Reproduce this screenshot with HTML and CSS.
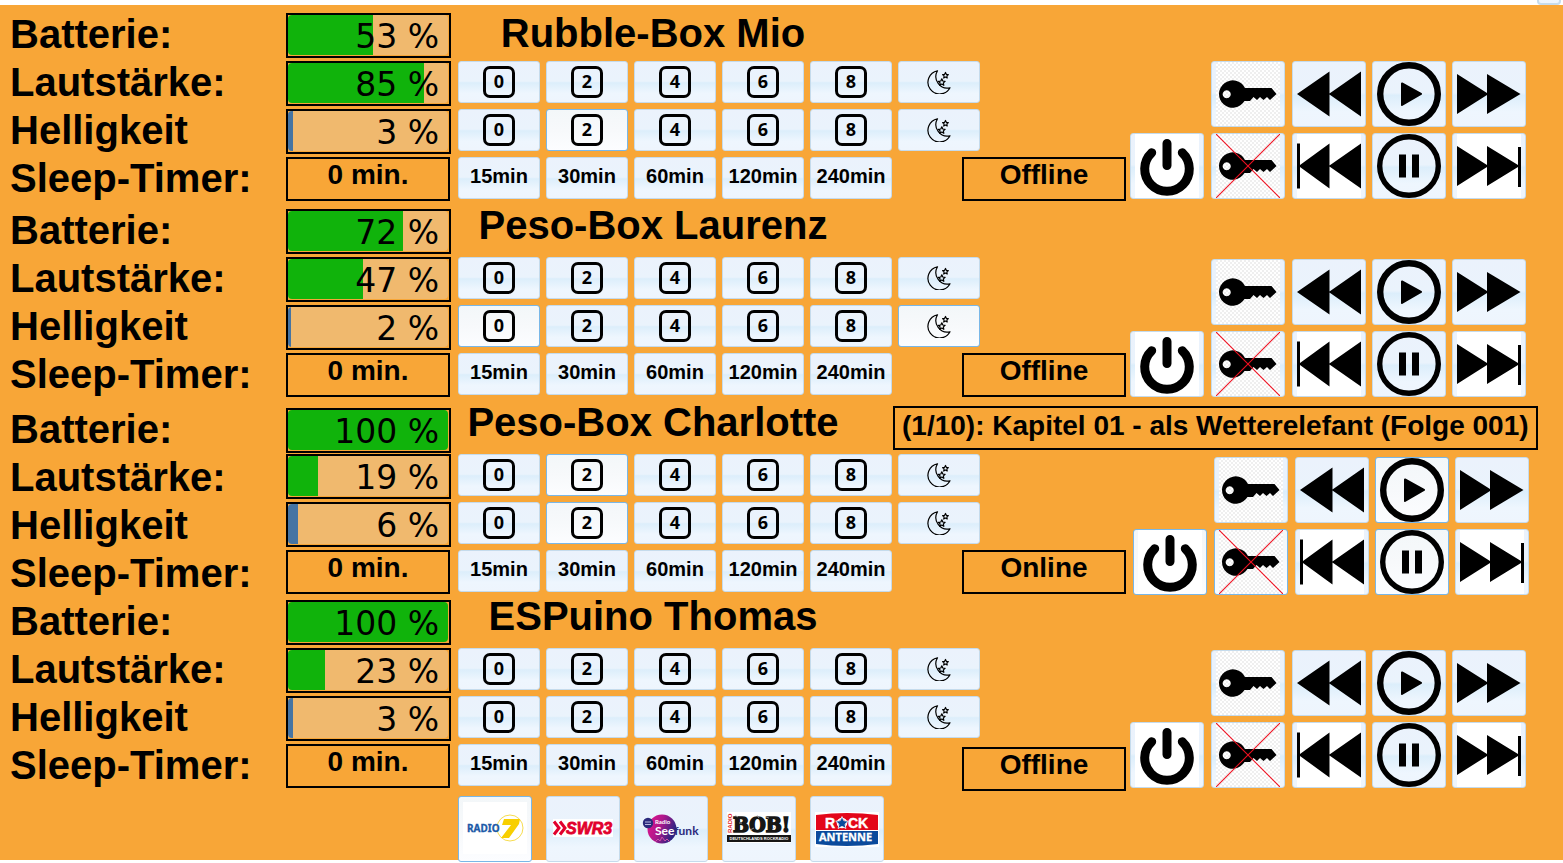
FILE: index.html
```html
<!DOCTYPE html>
<html lang="de">
<head>
<meta charset="utf-8">
<title>ESPuino Boxen</title>
<link rel="stylesheet" href="styles.css">
</head>
<body>
<svg class="defs" aria-hidden="true">
  <defs>
    <pattern id="checker" width="4" height="4" patternUnits="userSpaceOnUse">
      <path fill="#fff" d="M0 0h4v4H0z"/><path fill="#efefef" d="M0 0h2v2H0zM2 2h2v2H2z"/>
    </pattern>
    <linearGradient id="see" x1="0" x2="1" y1="0" y2="0.4">
      <stop offset="0" stop-color="#e6148c"/><stop offset="0.5" stop-color="#b0188c"/><stop offset="1" stop-color="#2b2382"/>
    </linearGradient>
    <symbol id="key" viewBox="0 0 64 64">
      <path fill="url(#checker)" d="M0 0h64v64H0z"/>
      <path fill-rule="evenodd" d="M29 26H55.500L60.500 32 54 38 51 35 47.500 38 44 35 41 38 37.500 35 34 39H28.500A13.700 13.700 0 1 1 29 26ZM10.700 28.300a4 4 0 1 0 .01 0Z"/>
    </symbol>
    <symbol id="nokey" viewBox="0 0 64 64"><use href="#key"/><path d="M0 0L64 64" stroke="#f01020" stroke-width="1.100"/><path d="M64 0L0 64" stroke="#f01020" stroke-width="1.100"/></symbol>
    <symbol id="power" viewBox="0 0 64 64">
      <path fill="#fff" d="M0 0h64v64H0z"/>
      <path d="M16.700 18.700A22.300 22.300 0 1 0 47.300 18.700M32 9.500V31.500" fill="none" stroke="#000" stroke-width="9" stroke-linecap="round"/>
    </symbol>
    <symbol id="rew" viewBox="0 0 64 64"><path d="M0 32 32.500 9.500V31.500L64 9.500V54.500L32.500 32.500V54.500Z"/></symbol>
    <symbol id="fwd" viewBox="0 0 64 64"><path d="M0 12 30 31V12L63.500 32 30 52V33L0 52Z"/></symbol>
    <symbol id="prev" viewBox="0 0 64 64"><path fill="#fff" d="M0 0h64v64H0z"/><path d="M0 9.500H3V31L32.500 9.500V31.500L64 9.500V54.500L32.500 32.500V54.500L3 33V54.500H0Z"/></symbol>
    <symbol id="next" viewBox="0 0 64 64"><path fill="#fff" d="M0 0h64v64H0z"/><path d="M0 12 30 31V12L61 31V13H64V53H61V33L30 52V33L0 52Z"/></symbol>
    <symbol id="play" viewBox="0 0 64 64"><circle cx="32" cy="32" r="28.800" fill="none" stroke="#000" stroke-width="6.400"/><path d="M25 21.500 44 32 25 43Z" stroke="#000" stroke-width="2" stroke-linejoin="round"/></symbol>
    <symbol id="pause" viewBox="0 0 64 64"><circle cx="32" cy="32" r="29.300" fill="none" stroke="#000" stroke-width="5.400"/><path d="M22 20.500h7v23h-7zM35 20.500h7v23h-7z"/></symbol>
    <symbol id="moon" viewBox="0 0 24 24">
      <g fill="none" stroke="#000" stroke-width="1.200" stroke-linejoin="round">
        <path d="M10.500 .8A11.700 11.700 0 1 0 23 17.800 11.500 11.500 0 0 1 10.500 .8Z"/>
        <path d="M14.800 8.800l1 2.200 2.300.3-1.700 1.600.4 2.400-2-1.200-2.100 1.200.4-2.400-1.700-1.600 2.400-.3zM18.500 2.500l.8 1.800 2 .3-1.400 1.400.3 2-1.700-1-1.800 1 .4-2-1.500-1.400 2-.3z"/>
      </g>
    </symbol>
  </defs>
</svg>

<header class="topbar"><button class="btn tab" type="button" aria-label="Menü"></button></header>

<main class="board">

  <section class="box box-mio">
    <div class="row head">
      <span class="label">Batterie:</span>
      <div class="meter"><div class="track"><div class="fill" style="width:53%"></div></div><span class="value">53 %</span></div>
      <h2 class="title">Rubble-Box Mio</h2>
    </div>
    <div class="rows">
      <div class="row">
        <span class="label">Lautstärke:</span>
        <div class="meter"><div class="track"><div class="fill" style="width:85%"></div></div><span class="value">85 %</span></div>
        <div class="keys">
          <button class="btn"><span class="num">0</span></button><button class="btn"><span class="num">2</span></button><button class="btn"><span class="num">4</span></button><button class="btn"><span class="num">6</span></button><button class="btn"><span class="num">8</span></button><button class="btn" aria-label="Nacht"><svg class="moon"><use href="#moon"/></svg></button>
        </div>
      </div>
      <div class="row">
        <span class="label">Helligkeit</span>
        <div class="meter"><div class="track"><div class="fill blue" style="width:3%"></div></div><span class="value">3 %</span></div>
        <div class="keys">
          <button class="btn"><span class="num">0</span></button><button class="btn on"><span class="num">2</span></button><button class="btn"><span class="num">4</span></button><button class="btn"><span class="num">6</span></button><button class="btn"><span class="num">8</span></button><button class="btn" aria-label="Nacht"><svg class="moon"><use href="#moon"/></svg></button>
        </div>
      </div>
      <div class="row">
        <span class="label">Sleep-Timer:</span>
        <output class="info">0 min.</output>
        <div class="keys">
          <button class="btn">15min</button><button class="btn">30min</button><button class="btn">60min</button><button class="btn">120min</button><button class="btn">240min</button>
        </div>
        <output class="info state">Offline</output>
      </div>
    </div>
    <div class="transport">
      <button class="btn big power" aria-label="Ein/Aus"><svg class="icon"><use href="#power"/></svg></button>
      <div class="pair">
        <button class="btn big" aria-label="Sperren"><svg class="icon"><use href="#key"/></svg></button>
        <button class="btn big" aria-label="Entsperren"><svg class="icon"><use href="#nokey"/></svg></button>
      </div>
      <div class="deck">
        <button class="btn big" aria-label="Zurückspulen"><svg class="icon"><use href="#rew"/></svg></button>
        <button class="btn big" aria-label="Abspielen"><svg class="icon"><use href="#play"/></svg></button>
        <button class="btn big" aria-label="Vorspulen"><svg class="icon"><use href="#fwd"/></svg></button>
        <button class="btn big" aria-label="Erster Titel"><svg class="icon"><use href="#prev"/></svg></button>
        <button class="btn big" aria-label="Pause"><svg class="icon"><use href="#pause"/></svg></button>
        <button class="btn big" aria-label="Letzter Titel"><svg class="icon"><use href="#next"/></svg></button>
      </div>
    </div>
  </section>

  <section class="box box-laurenz">
    <div class="row head">
      <span class="label">Batterie:</span>
      <div class="meter"><div class="track"><div class="fill" style="width:72%"></div></div><span class="value">72 %</span></div>
      <h2 class="title">Peso-Box Laurenz</h2>
    </div>
    <div class="rows">
      <div class="row">
        <span class="label">Lautstärke:</span>
        <div class="meter"><div class="track"><div class="fill" style="width:47%"></div></div><span class="value">47 %</span></div>
        <div class="keys">
          <button class="btn"><span class="num">0</span></button><button class="btn"><span class="num">2</span></button><button class="btn"><span class="num">4</span></button><button class="btn"><span class="num">6</span></button><button class="btn"><span class="num">8</span></button><button class="btn" aria-label="Nacht"><svg class="moon"><use href="#moon"/></svg></button>
        </div>
      </div>
      <div class="row">
        <span class="label">Helligkeit</span>
        <div class="meter"><div class="track"><div class="fill blue" style="width:2%"></div></div><span class="value">2 %</span></div>
        <div class="keys">
          <button class="btn on"><span class="num">0</span></button><button class="btn"><span class="num">2</span></button><button class="btn"><span class="num">4</span></button><button class="btn"><span class="num">6</span></button><button class="btn"><span class="num">8</span></button><button class="btn on" aria-label="Nacht"><svg class="moon"><use href="#moon"/></svg></button>
        </div>
      </div>
      <div class="row">
        <span class="label">Sleep-Timer:</span>
        <output class="info">0 min.</output>
        <div class="keys">
          <button class="btn">15min</button><button class="btn">30min</button><button class="btn">60min</button><button class="btn">120min</button><button class="btn">240min</button>
        </div>
        <output class="info state">Offline</output>
      </div>
    </div>
    <div class="transport">
      <button class="btn big power" aria-label="Ein/Aus"><svg class="icon"><use href="#power"/></svg></button>
      <div class="pair">
        <button class="btn big" aria-label="Sperren"><svg class="icon"><use href="#key"/></svg></button>
        <button class="btn big" aria-label="Entsperren"><svg class="icon"><use href="#nokey"/></svg></button>
      </div>
      <div class="deck">
        <button class="btn big" aria-label="Zurückspulen"><svg class="icon"><use href="#rew"/></svg></button>
        <button class="btn big" aria-label="Abspielen"><svg class="icon"><use href="#play"/></svg></button>
        <button class="btn big" aria-label="Vorspulen"><svg class="icon"><use href="#fwd"/></svg></button>
        <button class="btn big" aria-label="Erster Titel"><svg class="icon"><use href="#prev"/></svg></button>
        <button class="btn big" aria-label="Pause"><svg class="icon"><use href="#pause"/></svg></button>
        <button class="btn big" aria-label="Letzter Titel"><svg class="icon"><use href="#next"/></svg></button>
      </div>
    </div>
  </section>

  <section class="box box-charlotte">
    <div class="row head">
      <span class="label">Batterie:</span>
      <div class="meter"><div class="track"><div class="fill" style="width:100%"></div></div><span class="value">100 %</span></div>
      <h2 class="title">Peso-Box Charlotte</h2>
      <output class="info song">(1/10): Kapitel 01 - als Wetterelefant (Folge 001)</output>
    </div>
    <div class="rows">
      <div class="row">
        <span class="label">Lautstärke:</span>
        <div class="meter"><div class="track"><div class="fill" style="width:19%"></div></div><span class="value">19 %</span></div>
        <div class="keys">
          <button class="btn"><span class="num">0</span></button><button class="btn on"><span class="num">2</span></button><button class="btn"><span class="num">4</span></button><button class="btn"><span class="num">6</span></button><button class="btn"><span class="num">8</span></button><button class="btn" aria-label="Nacht"><svg class="moon"><use href="#moon"/></svg></button>
        </div>
      </div>
      <div class="row">
        <span class="label">Helligkeit</span>
        <div class="meter"><div class="track"><div class="fill blue" style="width:6%"></div></div><span class="value">6 %</span></div>
        <div class="keys">
          <button class="btn"><span class="num">0</span></button><button class="btn on"><span class="num">2</span></button><button class="btn"><span class="num">4</span></button><button class="btn"><span class="num">6</span></button><button class="btn"><span class="num">8</span></button><button class="btn" aria-label="Nacht"><svg class="moon"><use href="#moon"/></svg></button>
        </div>
      </div>
      <div class="row">
        <span class="label">Sleep-Timer:</span>
        <output class="info">0 min.</output>
        <div class="keys">
          <button class="btn">15min</button><button class="btn">30min</button><button class="btn">60min</button><button class="btn">120min</button><button class="btn">240min</button>
        </div>
        <output class="info state">Online</output>
      </div>
    </div>
    <div class="transport">
      <button class="btn big on power" aria-label="Ein/Aus"><svg class="icon"><use href="#power"/></svg></button>
      <div class="pair">
        <button class="btn big" aria-label="Sperren"><svg class="icon"><use href="#key"/></svg></button>
        <button class="btn big on" aria-label="Entsperren"><svg class="icon"><use href="#nokey"/></svg></button>
      </div>
      <div class="deck">
        <button class="btn big" aria-label="Zurückspulen"><svg class="icon"><use href="#rew"/></svg></button>
        <button class="btn big on" aria-label="Abspielen"><svg class="icon"><use href="#play"/></svg></button>
        <button class="btn big" aria-label="Vorspulen"><svg class="icon"><use href="#fwd"/></svg></button>
        <button class="btn big" aria-label="Erster Titel"><svg class="icon"><use href="#prev"/></svg></button>
        <button class="btn big on" aria-label="Pause"><svg class="icon"><use href="#pause"/></svg></button>
        <button class="btn big" aria-label="Letzter Titel"><svg class="icon"><use href="#next"/></svg></button>
      </div>
    </div>
  </section>

  <section class="box box-thomas">
    <div class="row head">
      <span class="label">Batterie:</span>
      <div class="meter"><div class="track"><div class="fill" style="width:100%"></div></div><span class="value">100 %</span></div>
      <h2 class="title">ESPuino Thomas</h2>
    </div>
    <div class="rows">
      <div class="row">
        <span class="label">Lautstärke:</span>
        <div class="meter"><div class="track"><div class="fill" style="width:23%"></div></div><span class="value">23 %</span></div>
        <div class="keys">
          <button class="btn"><span class="num">0</span></button><button class="btn"><span class="num">2</span></button><button class="btn"><span class="num">4</span></button><button class="btn"><span class="num">6</span></button><button class="btn"><span class="num">8</span></button><button class="btn" aria-label="Nacht"><svg class="moon"><use href="#moon"/></svg></button>
        </div>
      </div>
      <div class="row">
        <span class="label">Helligkeit</span>
        <div class="meter"><div class="track"><div class="fill blue" style="width:3%"></div></div><span class="value">3 %</span></div>
        <div class="keys">
          <button class="btn"><span class="num">0</span></button><button class="btn"><span class="num">2</span></button><button class="btn"><span class="num">4</span></button><button class="btn"><span class="num">6</span></button><button class="btn"><span class="num">8</span></button><button class="btn" aria-label="Nacht"><svg class="moon"><use href="#moon"/></svg></button>
        </div>
      </div>
      <div class="row">
        <span class="label">Sleep-Timer:</span>
        <output class="info">0 min.</output>
        <div class="keys">
          <button class="btn">15min</button><button class="btn">30min</button><button class="btn">60min</button><button class="btn">120min</button><button class="btn">240min</button>
        </div>
        <output class="info state">Offline</output>
      </div>
    </div>
    <div class="transport">
      <button class="btn big power" aria-label="Ein/Aus"><svg class="icon"><use href="#power"/></svg></button>
      <div class="pair">
        <button class="btn big" aria-label="Sperren"><svg class="icon"><use href="#key"/></svg></button>
        <button class="btn big" aria-label="Entsperren"><svg class="icon"><use href="#nokey"/></svg></button>
      </div>
      <div class="deck">
        <button class="btn big" aria-label="Zurückspulen"><svg class="icon"><use href="#rew"/></svg></button>
        <button class="btn big" aria-label="Abspielen"><svg class="icon"><use href="#play"/></svg></button>
        <button class="btn big" aria-label="Vorspulen"><svg class="icon"><use href="#fwd"/></svg></button>
        <button class="btn big" aria-label="Erster Titel"><svg class="icon"><use href="#prev"/></svg></button>
        <button class="btn big" aria-label="Pause"><svg class="icon"><use href="#pause"/></svg></button>
        <button class="btn big" aria-label="Letzter Titel"><svg class="icon"><use href="#next"/></svg></button>
      </div>
    </div>
  </section>

  <nav class="stations" aria-label="Radiosender">
    <button class="btn big on" aria-label="Radio 7">
      <svg class="icon" viewBox="0 0 64 64">
        <path fill="#fff" d="M0 5h64v52H0z"/>
        <circle cx="47" cy="31" r="13" fill="none" stroke="#f6dc50"/>
        <text x="4" y="35" font-family="Noto Sans" font-size="10" font-weight="700" fill="#1c5aa8" stroke="#1c5aa8" stroke-width=".3">RADIO</text>
        <path fill="#f8cf00" d="M41 22H57L56 27 46 41H38L48 28H39Z"/>
      </svg>
    </button>
    <button class="btn big" aria-label="SWR3">
      <svg class="icon" viewBox="0 0 64 64">
        <path fill="#fff" d="M2 22h60v18H2z"/>
        <path d="M3 24.500l5 6.500-5 6.500M9 24.500l5 6.500-5 6.500" fill="none" stroke="#e1002d" stroke-width="3"/>
        <text x="15" y="37" font-family="Liberation Sans" font-size="16" font-weight="700" font-style="italic" fill="#e1002d" stroke="#e1002d" stroke-width=".8">SWR3</text>
      </svg>
    </button>
    <button class="btn big" aria-label="Radio Seefunk">
      <svg class="icon" viewBox="0 0 64 64">
        <circle cx="23" cy="32" r="14.500" fill="url(#see)"/>
        <path d="M16 45l3-3 2 2 2-4 3 4 2-2 3 3" fill="none" stroke="#d050a8"/>
        <circle cx="9" cy="26" r="5.200" fill="#2b2a7c"/>
        <path d="M6 25h6M6 27.500h6" stroke="#b8b8e0" stroke-width="1"/>
        <text x="16" y="27" font-family="Lato" font-size="6" fill="#fff">Radio</text>
        <text x="16" y="38" font-family="Lato" font-size="12" font-weight="700" fill="#fff">See<tspan fill="#2b2a7c">funk</tspan></text>
      </svg>
    </button>
    <button class="btn big" aria-label="Radio Bob">
      <svg class="icon" viewBox="0 0 64 64">
        <path fill="#fff" d="M0 15h64v31H0z"/>
        <text x="0" y="0" transform="translate(5 36) rotate(-90)" font-family="Liberation Sans" font-size="6" font-weight="700" fill="#e02020">RADIO</text>
        <text x="6" y="35" font-family="DejaVu Serif Condensed, Liberation Sans" font-size="21" font-weight="700" fill="#161616" stroke="#161616" stroke-width="1.600">BOB!</text>
        <path d="M8 18l3 2M23 33l4-2M30 18l2 3M45 33l3-3M12 26h3M39 20l3 1" stroke="#bbb" stroke-width=".7"/>
        <path fill="#161616" d="M0 38h64v7H0z"/>
        <text x="32" y="43" text-anchor="middle" font-family="Liberation Sans" font-size="4" font-weight="700" fill="#fff">DEUTSCHLANDS ROCKRADIO</text>
      </svg>
    </button>
    <button class="btn big" aria-label="Rock Antenne">
      <svg class="icon" viewBox="0 0 64 64">
        <path fill="#fff" d="M0 15h64v35H0z"/>
        <path fill="#e3061a" d="M1 18Q32 14 63 18V33H1Z"/>
        <path fill="#0a4a9c" d="M1 34H63V47Q32 51 1 47Z"/>
        <text x="10" y="31" font-family="Liberation Sans" font-size="14" font-weight="700" fill="#fff" stroke="#fff" stroke-width=".4">R</text>
        <text x="33" y="31" font-family="Liberation Sans" font-size="14" font-weight="700" fill="#fff" stroke="#fff" stroke-width=".4">CK</text>
        <circle cx="27" cy="26" r="4.500" fill="none" stroke="#fff" stroke-width="1.600"/>
        <path d="M27 19.500l1.800 4.200 4.500.5-3.300 3 .9 4.300-3.900-2.200-3.900 2.200.9-4.300-3.300-3 4.500-.5z" fill="#0a4a9c" stroke="#fff" stroke-width=".8"/>
        <text x="4" y="44" font-family="Open Sans" font-size="11" font-weight="700" fill="#fff" stroke="#fff" stroke-width=".3">ANTENNE</text>
      </svg>
    </button>
  </nav>
</main>
</body>
</html>
```

FILE: styles.css
```css
* { box-sizing: border-box; }

body {
  margin: 0;
  padding-bottom: 3px;
  background: #fff;
  color: #000;
  font-family: "Liberation Sans", Arial, sans-serif;
}

.defs { position: absolute; width: 0; height: 0; }

.topbar {
  height: 5px;
  display: flex;
  justify-content: flex-end;
  align-items: flex-end;
  padding-right: 2px;
  overflow: hidden;
}

.board {
  display: flow-root;
  background: #f8a637;
  padding: 8px 0 0 10px;
}

.box {
  display: grid;
  grid-template-columns: 1116px auto;
  grid-template-rows: 45px auto;
  row-gap: 3px;
  justify-content: start;
}
.head { grid-column: 1 / -1; }
.box-laurenz { margin-top: 7px; }
.box-charlotte { margin-top: 8px; }
.box-thomas { margin-top: 5px; }

.rows {
  display: grid;
  grid-auto-rows: 45px;
  row-gap: 3px;
}
.row { display: flex; align-items: flex-start; }

.label {
  flex: 0 0 276px;
  font-size: 40px;
  line-height: 42px;
  font-weight: 700;
}
.box-charlotte .label,
.box-charlotte .head .meter { margin-top: 2px; }

.meter {
  flex: 0 0 165px;
  height: 45px;
  border: 2px solid #000;
  display: grid;
}
.track, .value { grid-area: 1 / 1; }
.track {
  width: 160px;
  height: 40px;
  border-radius: 4px;
  background: #f0b96e;
  overflow: hidden;
}
.fill { height: 100%; background: #10b30b; }
.fill.blue { background: #4574a3; }
.value {
  justify-self: end;
  padding-right: 10px;
  font: 33px/44px "DejaVu Sans", Verdana, sans-serif;
}

.title {
  flex: 0 0 390px;
  margin: 0 0 0 7px;
  text-align: center;
  white-space: nowrap;
  font-size: 40px;
  line-height: 40px;
  font-weight: 700;
}
.box + .box .title { line-height: 32px; }

.info {
  flex: 0 0 164px;
  height: 44px;
  border: 2px solid #000;
  text-align: center;
  white-space: nowrap;
  font-size: 28px;
  line-height: 32px;
  font-weight: 700;
}
.info + .keys { margin-left: 8px; }
.state { margin-left: auto; }
.box-thomas .state { margin-top: 3px; }
.song {
  flex: 0 0 auto;
  margin-left: 45px;
  padding: 0 7px;
  line-height: 36px;
}

.keys {
  display: flex;
  gap: 6px;
  margin-left: 7px;
}

.btn {
  display: flex;
  align-items: center;
  justify-content: center;
  width: 82px;
  height: 42px;
  margin: 0;
  padding: 0;
  border: 1px solid #c5dbec;
  border-radius: 3px;
  background: linear-gradient(#ebf2fc 0%, #eaf3fc 48%, #dceefb 52%, #eef6fe 78%, #eef5fd 100%);
  color: #000;
  font: 700 20px/36px "Liberation Sans", Arial, sans-serif;
  overflow: hidden;
}
.info + .keys .btn { padding-bottom: 4px; }
.btn.on {
  border-color: #79b7e7;
  background: linear-gradient(#f3f7f9 0%, #f7f9fb 50%, #fcfdff 100%);
}
.btn.big { width: 74px; height: 66px; }
.btn.tab { flex: none; width: 24px; height: 20px; border-width: 2px; border-radius: 4px; }

.num {
  width: 32px;
  height: 32px;
  border: 3px solid #000;
  border-radius: 7px;
  font: 700 18px/25px "Noto Sans", "Open Sans", sans-serif;
  text-align: center;
}
.moon { width: 24px; height: 24px; }
.icon { width: 64px; height: 64px; flex: none; }

.transport {
  display: flex;
  align-items: flex-start;
  gap: 7px;
  padding-left: 4px;
}
.power { margin-top: 72px; }
.pair { display: grid; gap: 6px; }
.deck { display: grid; grid-template-columns: repeat(3, 74px); gap: 6px; }
.box-laurenz .transport,
.box-thomas .transport { padding-top: 2px; }
.box-charlotte .transport { padding: 3px 0 0 7px; }

.stations {
  display: flex;
  gap: 14px;
  margin: 7px 0 -2px 448px;
}
```
